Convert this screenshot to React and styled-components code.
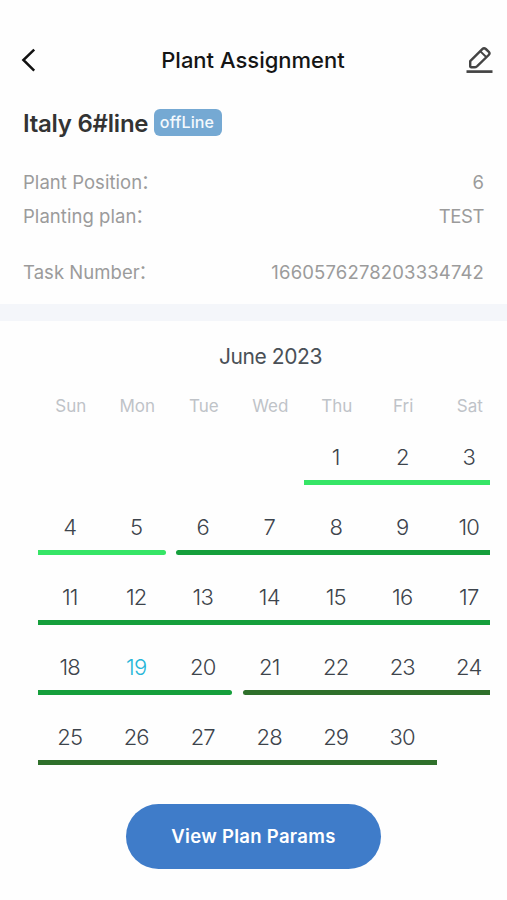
import React from "react";
import styled, {createGlobalStyle} from "styled-components";

const WEEKDAYS = ["Sun", "Mon", "Tue", "Wed", "Thu", "Fri", "Sat"];
const TODAY = 19;
const FIRST_WEEKDAY = 4;
const DAYS_IN_MONTH = 30;

const STAGES = [
  {from: 1, to: 5, color: "#36e566"},
  {from: 6, to: 20, color: "#159f3c"},
  {from: 21, to: 30, color: "#2f702b"},
];

const DETAILS = [
  {label: "Plant Position", value: "6"},
  {label: "Planting plan", value: "TEST", tracking: "-0.4px"},
  {label: "Task Number", value: "1660576278203334742", spaced: true, tracking: "0.15px"},
];

const DayCell = ({day}) => {
  const stage = STAGES.find((s) => day >= s.from && day <= s.to);
  const column = (day - 1 + FIRST_WEEKDAY) % 7;
  return (
    <Day $column={column + 1}>
      <DayNumber $today={day === TODAY}>{day}</DayNumber>
      <StageBar
        $color={stage.color}
        $isStart={day === stage.from && day !== 1}
        $isEnd={day === stage.to && day !== DAYS_IN_MONTH}
        $isLastColumn={column === 6}
      />
    </Day>
  );
};

const App = () => {
  const days = Array.from({length: DAYS_IN_MONTH}, (_, i) => i + 1);

  return (
    <>
      <GlobalStyle />
      <Screen>
        <Header>
          <IconButton aria-label="Back">
            <svg width="16" height="26" viewBox="0 0 16 26">
              <path
                d="M14.2 2.6 L3.4 13 L14.2 23.6"
                fill="none"
                stroke="#111"
                strokeWidth="2.5"
              />
            </svg>
          </IconButton>
          <PageTitle>Plant Assignment</PageTitle>
          <IconButton aria-label="Edit">
            <svg width="28" height="28" viewBox="0 0 28 28">
              <g
                fill="none"
                stroke="#444"
                strokeWidth="2.4"
                strokeLinejoin="round"
              >
                <path d="M5.2 20.2 L5.2 15.2 L17.3 3.1 Q19 1.4 20.8 3 L23.8 5.8 Q25.3 7.4 23.7 9 L12.2 20.1 Q10.9 21.3 9.3 21.3 L6.3 21.3 Q5.2 21.3 5.2 20.2 Z" />
                <path d="M15.4 5.4 L21.2 11" strokeWidth="2" />
              </g>
              <path d="M1.5 25.6 H27.5" stroke="#444" strokeWidth="2.7" />
            </svg>
          </IconButton>
        </Header>

        <Summary>
          <NameRow>
            <LineName>Italy 6#line</LineName>
            <StatusTag>offLine</StatusTag>
          </NameRow>
          {DETAILS.map((item) => (
            <DetailRow key={item.label} $spaced={item.spaced}>
              <DetailLabel>
                {item.label}
                <Colon>：</Colon>
              </DetailLabel>
              <DetailValue $tracking={item.tracking}>{item.value}</DetailValue>
            </DetailRow>
          ))}
        </Summary>

        <Divider />

        <Month>June 2023</Month>
        <WeekHeader>
          {WEEKDAYS.map((name) => (
            <span key={name}>{name}</span>
          ))}
        </WeekHeader>
        <DayGrid>
          {days.map((day) => (
            <DayCell key={day} day={day} />
          ))}
        </DayGrid>

        <PlanButton>View Plan Params</PlanButton>
      </Screen>
    </>
  );
};

const GlobalStyle = createGlobalStyle`
  * {
    box-sizing: border-box;
  }
  body {
    margin: 0;
    background: #fefefe;
    font-family: Inter, "Liberation Sans", "Noto Sans CJK SC", sans-serif;
  }
`;

const Screen = styled.div`
  display: flex;
  flex-direction: column;
  width: 507px;
  height: 900px;
  overflow: hidden;
`;

const Header = styled.header`
  display: flex;
  align-items: center;
  justify-content: space-between;
  height: 52px;
  margin-top: 34px;
  padding: 0 14px 0 20px;
`;

const IconButton = styled.button`
  display: flex;
  justify-content: flex-start;
  padding: 0;
  border: 0;
  background: none;
`;

const PageTitle = styled.h1`
  margin: 0 0 0 5px;
  font-size: 22px;
  font-weight: 500;
  color: #151515;
`;

const Summary = styled.section`
  height: 218px;
  padding: 20px 23px 0;
`;

const NameRow = styled.div`
  display: flex;
  height: 59px;
`;

const LineName = styled.h2`
  margin: 3px 6px 0 0;
  width: 125px;
  font-size: 24px;
  line-height: 30px;
  font-weight: 600;
  letter-spacing: -0.25px;
  white-space: nowrap;
  color: #333;
`;

const StatusTag = styled.span`
  width: 68px;
  height: 27px;
  margin-top: 3px;
  padding-right: 2px;
  border-radius: 6px;
  background: #75a9d3;
  color: #f4f9fd;
  font-size: 16px;
  font-weight: 500;
  letter-spacing: 0.15px;
  line-height: 26px;
  text-align: center;
`;

const DetailRow = styled.div`
  display: flex;
  justify-content: space-between;
  height: 34px;
  margin-top: ${(props) => (props.$spaced ? "22px" : "0")};
  font-size: 18.5px;
  line-height: 34px;
  color: #9b9b9b;
`;

const DetailLabel = styled.span`
  letter-spacing: 0.05px;
`;

const Colon = styled.span`
  margin-left: -1.5px;
  font-family: "Noto Sans CJK SC", sans-serif;
  font-size: 19px;
  line-height: 20px;
  vertical-align: 0.5px;
`;

const DetailValue = styled.span`
  letter-spacing: ${(props) => props.$tracking || "0"};
`;

const Divider = styled.div`
  height: 17px;
  background: #f4f6fa;
`;

const Month = styled.div`
  height: 70px;
  padding: 1px 0 0 34px;
  font-size: 21px;
  letter-spacing: -0.4px;
  line-height: 70px;
  text-align: center;
  color: #4a5057;
`;

const WeekHeader = styled.div`
  display: grid;
  grid-template-columns: repeat(7, 66.5px);
  height: 30px;
  padding-left: 37.5px;
  font-size: 17px;
  line-height: 30px;
  text-align: center;
  color: #bfc3c8;
`;

const DayGrid = styled.div`
  display: grid;
  grid-template-columns: repeat(7, 66.5px);
  grid-auto-rows: 70px;
  margin-top: 18px;
  padding-left: 37.5px;
`;

const Day = styled.div`
  grid-column: ${(props) => props.$column};
`;

const DayNumber = styled.div`
  height: 40.5px;
  padding: 2px 2px 0 0;
  font-size: 22px;
  font-weight: 300;
  letter-spacing: -0.8px;
  line-height: 32px;
  text-align: center;
  color: ${(props) => (props.$today ? "#28b6d8" : "#3d444c")};
`;

const StageBar = styled.div`
  height: 5.5px;
  margin-left: ${(props) => (props.$isStart ? "5.5px" : "0")};
  margin-right: ${(props) =>
    props.$isLastColumn ? "13px" : props.$isEnd ? "5px" : "0"};
  border-radius: ${(props) =>
    `${props.$isStart ? "3px" : "0"} ${props.$isEnd ? "3px 3px" : "0 0"} ${
      props.$isStart ? "3px" : "0"
    }`};
  background: ${(props) => props.$color};
`;

const PlanButton = styled.button`
  align-self: center;
  width: 255px;
  height: 65px;
  margin-top: 15px;
  padding: 0 0 2px;
  border: 0;
  border-radius: 33px;
  background: #3f7cc9;
  color: #fff;
  font-family: inherit;
  font-size: 18.5px;
  font-weight: 600;
  letter-spacing: 0.3px;
`;

export default App;
